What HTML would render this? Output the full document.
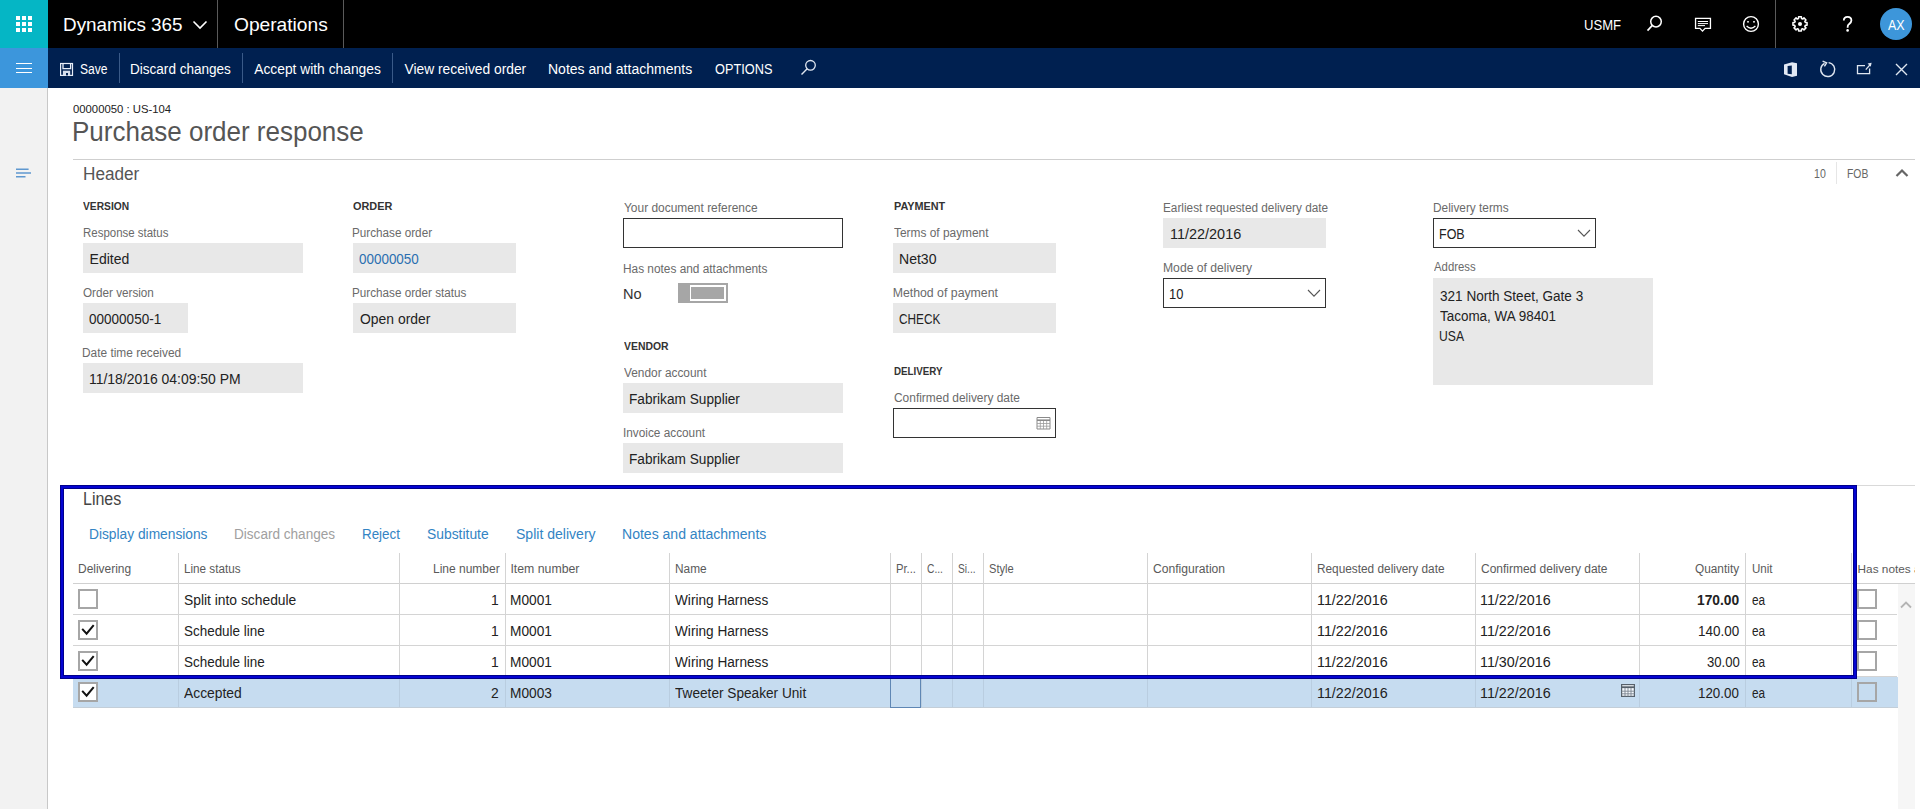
<!DOCTYPE html>
<html><head><meta charset="utf-8">
<style>
html,body{margin:0;padding:0;}
body{width:1920px;height:809px;overflow:hidden;position:relative;background:#fff;font-family:"Liberation Sans", sans-serif;}
.a{position:absolute;box-sizing:border-box;}
.t{position:absolute;white-space:nowrap;line-height:1;font-family:"Liberation Sans", sans-serif;}
.fld{position:absolute;background:#e8e8e8;}
.inp{position:absolute;box-sizing:border-box;border:1px solid #333;background:#fff;}
.hl{position:absolute;height:1px;background:#d4d4d4;}
.vl{position:absolute;width:1px;background:#d4d4d4;}
.cb{position:absolute;box-sizing:border-box;width:20px;height:20px;border:2px solid #a6a6a6;background:#fff;}
</style></head><body>
<!-- top bar -->
<div class="a" style="left:0;top:0;width:1920px;height:48px;background:#000"></div>
<div class="a" style="left:0;top:0;width:48px;height:48px;background:#05b6c5"></div>
<svg class="a" style="left:16px;top:16px" width="16" height="16" viewBox="0 0 16 16" fill="#fff">
<rect x="0" y="0" width="4" height="4"/><rect x="6" y="0" width="4" height="4"/><rect x="12" y="0" width="4" height="4"/>
<rect x="0" y="6" width="4" height="4"/><rect x="6" y="6" width="4" height="4"/><rect x="12" y="6" width="4" height="4"/>
<rect x="0" y="12" width="4" height="4"/><rect x="6" y="12" width="4" height="4"/><rect x="12" y="12" width="4" height="4"/>
</svg>
<svg class="a" style="left:192px;top:20px" width="16" height="10" viewBox="0 0 16 10"><path d="M1.5 1.5 L8 8 L14.5 1.5" stroke="#fff" stroke-width="1.6" fill="none"/></svg>
<div class="a" style="left:217px;top:0;width:1px;height:48px;background:#5a5a5a"></div>
<div class="a" style="left:343px;top:0;width:1px;height:48px;background:#5a5a5a"></div>
<div class="a" style="left:1775px;top:0;width:1px;height:48px;background:#5a5a5a"></div>
<!-- search -->
<svg class="a" style="left:1644px;top:13px" width="22" height="22" viewBox="0 0 22 22"><circle cx="12" cy="8.6" r="5.3" stroke="#fff" stroke-width="1.5" fill="none"/><path d="M8.3 12.4 L3.5 17.6" stroke="#fff" stroke-width="1.6"/></svg>
<!-- chat -->
<svg class="a" style="left:1692px;top:15px" width="22" height="20" viewBox="0 0 22 20"><path d="M3.55 3.45 H18.45 V13.35 H13.1 L10.5 16.1 L7.9 13.35 H3.55 Z" stroke="#fff" stroke-width="1.3" fill="none"/><path d="M5.8 6.5H16M5.8 8.6H16M5.8 10.6H13" stroke="#fff" stroke-width="1"/></svg>
<!-- smiley -->
<svg class="a" style="left:1740px;top:13px" width="22" height="22" viewBox="0 0 22 22"><circle cx="11" cy="11" r="7.4" stroke="#fff" stroke-width="1.4" fill="none"/><rect x="7.2" y="8" width="1.6" height="1.6" fill="#fff"/><rect x="13.2" y="8" width="1.6" height="1.6" fill="#fff"/><path d="M6.6 13 Q11 17.4 15.4 13" stroke="#fff" stroke-width="1.3" fill="none"/></svg>
<!-- gear -->
<svg class="a" style="left:1789px;top:13px" width="22" height="22" viewBox="0 0 22 22">
<g transform="translate(11,10.9)"><path d="M-1.47,-5.30 L-1.43,-7.06 L1.43,-7.06 L1.47,-5.30 L2.71,-4.79 L3.98,-6.00 L6.00,-3.98 L4.79,-2.71 L5.30,-1.47 L7.06,-1.43 L7.06,1.43 L5.30,1.47 L4.79,2.71 L6.00,3.98 L3.98,6.00 L2.71,4.79 L1.47,5.30 L1.43,7.06 L-1.43,7.06 L-1.47,5.30 L-2.71,4.79 L-3.98,6.00 L-6.00,3.98 L-4.79,2.71 L-5.30,1.47 L-7.06,1.43 L-7.06,-1.43 L-5.30,-1.47 L-4.79,-2.71 L-6.00,-3.98 L-3.98,-6.00 L-2.71,-4.79 Z" fill="none" stroke="#fff" stroke-width="1.5" stroke-linejoin="round"/><circle r="2" fill="#fff"/></g></svg>
<!-- help -->
<svg class="a" style="left:1839px;top:14px" width="16" height="20" viewBox="0 0 16 20"><path d="M4.8 6.5 C4.8 4.2 6.4 2.9 8.6 2.9 C10.8 2.9 12.4 4.3 12.4 6.5 C12.4 8.7 10.6 9.5 9.4 10.6 C8.8 11.2 8.6 11.8 8.6 13.8" stroke="#fff" stroke-width="1.8" fill="none"/><circle cx="8.6" cy="16.4" r="1.3" fill="#fff"/></svg>
<!-- avatar -->
<div class="a" style="left:1880px;top:8px;width:32px;height:32px;border-radius:50%;background:#3d96da"></div>

<!-- action bar -->
<div class="a" style="left:0;top:48px;width:1920px;height:40px;background:#002050"></div>
<div class="a" style="left:0;top:48px;width:48px;height:40px;background:#3c96dc"></div>
<div class="a" style="left:16px;top:63px;width:16px;height:1.4px;background:#fff"></div>
<div class="a" style="left:16px;top:67.5px;width:16px;height:1.4px;background:#fff"></div>
<div class="a" style="left:16px;top:72px;width:16px;height:1.4px;background:#fff"></div>
<svg class="a" style="left:59px;top:62px" width="15" height="15" viewBox="0 0 15 15"><rect x="1.6" y="1.5" width="11.9" height="11.9" stroke="#e6ecf6" stroke-width="1.2" fill="none"/><path d="M4 1.5V6.6H11.6V1.5" stroke="#e6ecf6" stroke-width="1.3" fill="none"/><rect x="3.9" y="8.7" width="7.3" height="4.7" fill="#d6deec"/><rect x="7" y="11" width="2" height="2.4" fill="#002050"/></svg>
<div class="a" style="left:119px;top:53px;width:1px;height:30px;background:#3a5a88"></div>
<div class="a" style="left:242px;top:53px;width:1px;height:30px;background:#3a5a88"></div>
<div class="a" style="left:392px;top:53px;width:1px;height:30px;background:#3a5a88"></div>
<svg class="a" style="left:798px;top:57px" width="22" height="22" viewBox="0 0 22 22"><circle cx="12.5" cy="8.3" r="4.8" stroke="#dfe6f0" stroke-width="1.3" fill="none"/><path d="M9.2 11.8 L3.5 17.5" stroke="#dfe6f0" stroke-width="1.4"/></svg>
<!-- right icons -->
<svg class="a" style="left:1782px;top:59px" width="18" height="20" viewBox="0 0 18 20"><path fill-rule="evenodd" d="M2 5.4 L10 3.2 L15 4.2 V16.8 L10 17.9 L2 15.2 Z M5.6 6.9 L9.8 6.4 V15.2 L5.6 14.8 Z" fill="#e2e9f4"/></svg>
<svg class="a" style="left:1817px;top:59px" width="21" height="21" viewBox="0 0 21 21"><path d="M7.6 4.3 A7 7 0 1 0 11.6 3.6" stroke="#dfe6f0" stroke-width="1.4" fill="none"/><path d="M5.6 2.2 L9.6 3.8 L7.4 7.3" stroke="#dfe6f0" stroke-width="1.4" fill="none"/></svg>
<svg class="a" style="left:1855px;top:60px" width="18" height="18" viewBox="0 0 18 18"><path d="M10 5.6H2.5V13.6H14.6V8.5" stroke="#dfe6f0" stroke-width="1.3" fill="none"/><path d="M10.8 9.6 L15.4 4.4" stroke="#dfe6f0" stroke-width="1.3" fill="none"/><path d="M16.6 2.8 L12.6 3.6 L15.8 6.8 Z" fill="#dfe6f0"/></svg>
<svg class="a" style="left:1894px;top:62px" width="15" height="15" viewBox="0 0 15 15"><path d="M2 2 L13 13 M13 2 L2 13" stroke="#dfe6f0" stroke-width="1.4"/></svg>

<!-- left nav -->
<div class="a" style="left:0;top:88px;width:48px;height:721px;background:#f2f2f2;border-right:1px solid #c8c8c8"></div>
<svg class="a" style="left:16px;top:166px" width="16" height="14" viewBox="0 0 16 14"><path d="M0 3.2H12.6M0 7H15M0 10.7H9.5" stroke="#5f98cf" stroke-width="1.5"/></svg>

<!-- header separators -->
<div class="hl" style="left:73px;top:159px;width:1842px;background:#cfcfcf"></div>
<div class="a" style="left:1836px;top:162px;width:1px;height:22px;background:#e6e6e6"></div>
<svg class="a" style="left:1894px;top:166px" width="16" height="12" viewBox="0 0 16 12"><path d="M2.5 10 L8 4.5 L13.5 10" stroke="#666" stroke-width="2.2" fill="none"/></svg>

<!-- fields -->
<div class="fld" style="left:83px;top:243px;width:220px;height:30px"></div>
<div class="fld" style="left:83px;top:303px;width:105px;height:30px"></div>
<div class="fld" style="left:83px;top:363px;width:220px;height:30px"></div>
<div class="fld" style="left:353px;top:243px;width:163px;height:30px"></div>
<div class="fld" style="left:353px;top:303px;width:163px;height:30px"></div>
<div class="inp" style="left:623px;top:218px;width:220px;height:30px"></div>
<!-- toggle -->
<div class="a" style="left:678px;top:283px;width:50px;height:20px;background:#a6a6a6"></div>
<div class="a" style="left:690px;top:285px;width:36px;height:16px;border:2px solid #fff;border-left-width:1px;background:#a6a6a6"></div>
<div class="fld" style="left:623px;top:383px;width:220px;height:30px"></div>
<div class="fld" style="left:623px;top:443px;width:220px;height:30px"></div>
<div class="fld" style="left:893px;top:243px;width:163px;height:30px"></div>
<div class="fld" style="left:893px;top:303px;width:163px;height:30px"></div>
<div class="inp" style="left:893px;top:408px;width:163px;height:30px"></div>
<svg class="a" style="left:1036px;top:416px" width="15" height="14" viewBox="0 0 15 14"><path d="M1 1.5H14V13H1Z" stroke="#8a8a8a" stroke-width="1" fill="none"/><path d="M1 4.2H14" stroke="#8a8a8a" stroke-width="1.6"/><path d="M4.3 5V13M7.5 5V13M10.7 5V13M1 7.5H14M1 10.2H14" stroke="#9a9a9a" stroke-width="0.8"/></svg>
<div class="fld" style="left:1163px;top:218px;width:163px;height:30px"></div>
<div class="inp" style="left:1163px;top:278px;width:163px;height:30px"></div>
<svg class="a" style="left:1306px;top:287px" width="16" height="12" viewBox="0 0 16 12"><path d="M2 3 L8 9.2 L14 3" stroke="#555" stroke-width="1.1" fill="none"/></svg>
<div class="inp" style="left:1433px;top:218px;width:163px;height:30px"></div>
<svg class="a" style="left:1576px;top:227px" width="16" height="12" viewBox="0 0 16 12"><path d="M2 3 L8 9.2 L14 3" stroke="#555" stroke-width="1.1" fill="none"/></svg>
<div class="fld" style="left:1433px;top:278px;width:220px;height:107px"></div>

<!-- lines section separator -->
<div class="hl" style="left:73px;top:485px;width:1842px;background:#d9d9d9"></div>

<!-- grid -->
<div class="a" style="left:73px;top:677px;width:1825px;height:30px;background:#c6dcf0"></div>
<div class="a" style="left:1898px;top:584px;width:17px;height:225px;background:#f6f6f6"></div>
<svg class="a" style="left:1899px;top:598px" width="14" height="12" viewBox="0 0 14 12"><path d="M2 9.5 L7 4.5 L12 9.5" stroke="#b4b4b4" stroke-width="1.8" fill="none"/></svg>
<div class="hl" style="left:73px;top:583px;width:1842px;background:#d0d0d0"></div>
<div class="hl" style="left:73px;top:614px;width:1824px"></div>
<div class="hl" style="left:73px;top:645px;width:1824px"></div>
<div class="hl" style="left:73px;top:676px;width:1824px"></div>
<div class="hl" style="left:73px;top:707px;width:1825px;background:#c3ced8"></div>
<div class="vl" style="left:178px;top:553px;height:124px"></div><div class="vl" style="left:178px;top:677px;height:30px;background:#b9cde0"></div>
<div class="vl" style="left:399px;top:553px;height:124px"></div><div class="vl" style="left:399px;top:677px;height:30px;background:#b9cde0"></div>
<div class="vl" style="left:505px;top:553px;height:124px"></div><div class="vl" style="left:505px;top:677px;height:30px;background:#b9cde0"></div>
<div class="vl" style="left:669px;top:553px;height:124px"></div><div class="vl" style="left:669px;top:677px;height:30px;background:#b9cde0"></div>
<div class="vl" style="left:890px;top:553px;height:124px"></div><div class="vl" style="left:890px;top:677px;height:30px;background:#b9cde0"></div>
<div class="vl" style="left:921px;top:553px;height:124px"></div><div class="vl" style="left:921px;top:677px;height:30px;background:#b9cde0"></div>
<div class="vl" style="left:952px;top:553px;height:124px"></div><div class="vl" style="left:952px;top:677px;height:30px;background:#b9cde0"></div>
<div class="vl" style="left:983px;top:553px;height:124px"></div><div class="vl" style="left:983px;top:677px;height:30px;background:#b9cde0"></div>
<div class="vl" style="left:1147px;top:553px;height:124px"></div><div class="vl" style="left:1147px;top:677px;height:30px;background:#b9cde0"></div>
<div class="vl" style="left:1311px;top:553px;height:124px"></div><div class="vl" style="left:1311px;top:677px;height:30px;background:#b9cde0"></div>
<div class="vl" style="left:1475px;top:553px;height:124px"></div><div class="vl" style="left:1475px;top:677px;height:30px;background:#b9cde0"></div>
<div class="vl" style="left:1639px;top:553px;height:124px"></div><div class="vl" style="left:1639px;top:677px;height:30px;background:#b9cde0"></div>
<div class="vl" style="left:1745px;top:553px;height:124px"></div><div class="vl" style="left:1745px;top:677px;height:30px;background:#b9cde0"></div>
<div class="vl" style="left:1851px;top:553px;height:124px"></div><div class="vl" style="left:1851px;top:677px;height:30px;background:#b9cde0"></div>
<div class="a" style="left:890px;top:677px;width:31px;height:31px;border:1px solid #5f87b4"></div>
<svg class="a" style="left:1620px;top:683px" width="16" height="15" viewBox="0 0 16 15"><rect x="1.6" y="1.6" width="12.8" height="11.8" fill="#f4f8fc" stroke="#56606a" stroke-width="1.2"/><path d="M1.6 4.2H14.4" stroke="#56606a" stroke-width="1.8"/><path d="M5 5V13.4M8 5V13.4M11 5V13.4M1.6 8.2H14.4M1.6 10.8H14.4" stroke="#7a8490" stroke-width="0.9"/></svg>
<div class="cb" style="left:78px;top:589px"></div>
<div class="cb" style="left:1857px;top:589px;background:transparent"></div>
<div class="cb" style="left:78px;top:620px"><svg width="16" height="16" viewBox="0 0 16 16" style="position:absolute;left:0;top:0"><path d="M2.2 6.9 L6.6 11.7 L13.7 3.2" stroke="#111" stroke-width="2" fill="none"/></svg></div>
<div class="cb" style="left:1857px;top:620px;background:transparent"></div>
<div class="cb" style="left:78px;top:651px"><svg width="16" height="16" viewBox="0 0 16 16" style="position:absolute;left:0;top:0"><path d="M2.2 6.9 L6.6 11.7 L13.7 3.2" stroke="#111" stroke-width="2" fill="none"/></svg></div>
<div class="cb" style="left:1857px;top:651px;background:transparent"></div>
<div class="cb" style="left:78px;top:682px"><svg width="16" height="16" viewBox="0 0 16 16" style="position:absolute;left:0;top:0"><path d="M2.2 6.9 L6.6 11.7 L13.7 3.2" stroke="#111" stroke-width="2" fill="none"/></svg></div>
<div class="cb" style="left:1857px;top:682px;background:transparent"></div>

<div class="t" style="left:62.58px;top:16.00px;transform-origin:0 0;font-size:18.5px;color:#fff;transform:scaleX(1.0205);">Dynamics 365</div>
<div class="t" style="left:233.50px;top:16.00px;transform-origin:0 0;font-size:18.5px;color:#fff;transform:scaleX(1.0361);">Operations</div>
<div class="t" style="left:1583.59px;top:18.00px;transform-origin:0 0;font-size:14.4px;color:#fff;transform:scaleX(0.9080);">USMF</div>
<div class="t" style="left:1888.00px;top:19.00px;transform-origin:0 0;font-size:13.8px;color:#fff;transform:scaleX(0.9010);">AX</div>
<div class="t" style="left:79.50px;top:63.00px;transform-origin:0 0;font-size:13.8px;color:#fff;transform:scaleX(0.8749);">Save</div>
<div class="t" style="left:130.27px;top:63.00px;transform-origin:0 0;font-size:13.8px;color:#fff;transform:scaleX(0.9817);">Discard changes</div>
<div class="t" style="left:254.25px;top:63.00px;transform-origin:0 0;font-size:13.8px;color:#fff;">Accept with changes</div>
<div class="t" style="left:404.50px;top:63.00px;transform-origin:0 0;font-size:13.8px;color:#fff;">View received order</div>
<div class="t" style="left:547.73px;top:63.00px;transform-origin:0 0;font-size:13.8px;color:#fff;transform:scaleX(1.0161);">Notes and attachments</div>
<div class="t" style="left:714.50px;top:63.00px;transform-origin:0 0;font-size:13.8px;color:#fff;transform:scaleX(0.9250);">OPTIONS</div>
<div class="t" style="left:73.40px;top:103.00px;transform-origin:0 0;font-size:11.6px;color:#222;transform:scaleX(0.9752);">00000050 : US-104</div>
<div class="t" style="left:71.51px;top:118.00px;transform-origin:0 0;font-size:27.5px;color:#555;transform:scaleX(0.9449);">Purchase order response</div>
<div class="t" style="left:82.81px;top:165.00px;transform-origin:0 0;font-size:18.3px;color:#555;transform:scaleX(0.9393);">Header</div>
<div class="t" style="left:1814.00px;top:168.00px;transform-origin:0 0;font-size:12.3px;color:#666;transform:scaleX(0.8599);">10</div>
<div class="t" style="left:1847.06px;top:168.00px;transform-origin:0 0;font-size:12.3px;color:#666;transform:scaleX(0.8432);">FOB</div>
<div class="t" style="left:83.40px;top:201.00px;transform-origin:0 0;font-size:11px;color:#333;font-weight:700;transform:scaleX(0.9321);">VERSION</div>
<div class="t" style="left:82.77px;top:227.00px;transform-origin:0 0;font-size:12.3px;color:#6a6a6a;transform:scaleX(0.9320);">Response status</div>
<div class="t" style="left:89.60px;top:252.00px;transform-origin:0 0;font-size:14px;color:#222;">Edited</div>
<div class="t" style="left:83.40px;top:287.00px;transform-origin:0 0;font-size:12.3px;color:#6a6a6a;transform:scaleX(0.9511);">Order version</div>
<div class="t" style="left:89.30px;top:312.00px;transform-origin:0 0;font-size:14px;color:#222;transform:scaleX(0.9660);">00000050-1</div>
<div class="t" style="left:82.43px;top:347.00px;transform-origin:0 0;font-size:12.3px;color:#6a6a6a;transform:scaleX(0.9668);">Date time received</div>
<div class="t" style="left:89.00px;top:372.00px;transform-origin:0 0;font-size:14px;color:#222;transform:scaleX(0.9957);">11/18/2016 04:09:50 PM</div>
<div class="t" style="left:353.00px;top:201.00px;transform-origin:0 0;font-size:11px;color:#333;font-weight:700;transform:scaleX(0.9900);">ORDER</div>
<div class="t" style="left:352.05px;top:227.00px;transform-origin:0 0;font-size:12.3px;color:#6a6a6a;transform:scaleX(0.9521);">Purchase order</div>
<div class="t" style="left:359.30px;top:252.00px;transform-origin:0 0;font-size:14px;color:#2a6fb0;transform:scaleX(0.9600);">00000050</div>
<div class="t" style="left:352.05px;top:287.00px;transform-origin:0 0;font-size:12.3px;color:#6a6a6a;transform:scaleX(0.9509);">Purchase order status</div>
<div class="t" style="left:360.00px;top:312.00px;transform-origin:0 0;font-size:14px;color:#222;transform:scaleX(0.9936);">Open order</div>
<div class="t" style="left:623.70px;top:202.00px;transform-origin:0 0;font-size:12.3px;color:#6a6a6a;transform:scaleX(0.9703);">Your document reference</div>
<div class="t" style="left:622.74px;top:263.00px;transform-origin:0 0;font-size:12.3px;color:#6a6a6a;transform:scaleX(0.9640);">Has notes and attachments</div>
<div class="t" style="left:622.94px;top:288.00px;transform-origin:0 0;font-size:13.8px;color:#333;transform:scaleX(1.0552);">No</div>
<div class="t" style="left:623.70px;top:341.00px;transform-origin:0 0;font-size:11px;color:#333;font-weight:700;transform:scaleX(0.9466);">VENDOR</div>
<div class="t" style="left:623.70px;top:367.00px;transform-origin:0 0;font-size:12.3px;color:#6a6a6a;transform:scaleX(0.9646);">Vendor account</div>
<div class="t" style="left:628.72px;top:392.00px;transform-origin:0 0;font-size:14px;color:#222;transform:scaleX(0.9758);">Fabrikam Supplier</div>
<div class="t" style="left:622.74px;top:427.00px;transform-origin:0 0;font-size:12.3px;color:#6a6a6a;transform:scaleX(0.9596);">Invoice account</div>
<div class="t" style="left:628.72px;top:452.00px;transform-origin:0 0;font-size:14px;color:#222;transform:scaleX(0.9758);">Fabrikam Supplier</div>
<div class="t" style="left:893.70px;top:201.00px;transform-origin:0 0;font-size:11px;color:#333;font-weight:700;transform:scaleX(0.9859);">PAYMENT</div>
<div class="t" style="left:893.70px;top:227.00px;transform-origin:0 0;font-size:12.3px;color:#6a6a6a;transform:scaleX(0.9674);">Terms of payment</div>
<div class="t" style="left:898.70px;top:252.00px;transform-origin:0 0;font-size:14px;color:#222;transform:scaleX(1.0035);">Net30</div>
<div class="t" style="left:892.70px;top:287.00px;transform-origin:0 0;font-size:12.3px;color:#6a6a6a;">Method of payment</div>
<div class="t" style="left:899.40px;top:312.00px;transform-origin:0 0;font-size:14px;color:#222;transform:scaleX(0.8416);">CHECK</div>
<div class="t" style="left:893.70px;top:366.00px;transform-origin:0 0;font-size:11px;color:#333;font-weight:700;transform:scaleX(0.8884);">DELIVERY</div>
<div class="t" style="left:893.70px;top:392.00px;transform-origin:0 0;font-size:12.3px;color:#6a6a6a;transform:scaleX(0.9698);">Confirmed delivery date</div>
<div class="t" style="left:1162.54px;top:202.00px;transform-origin:0 0;font-size:12.3px;color:#6a6a6a;transform:scaleX(0.9585);">Earliest requested delivery date</div>
<div class="t" style="left:1169.57px;top:227.00px;transform-origin:0 0;font-size:14px;color:#222;transform:scaleX(1.0316);">11/22/2016</div>
<div class="t" style="left:1162.51px;top:262.00px;transform-origin:0 0;font-size:12.3px;color:#6a6a6a;transform:scaleX(0.9881);">Mode of delivery</div>
<div class="t" style="left:1169.38px;top:287.00px;transform-origin:0 0;font-size:14px;color:#222;transform:scaleX(0.9198);">10</div>
<div class="t" style="left:1432.54px;top:202.00px;transform-origin:0 0;font-size:12.3px;color:#6a6a6a;transform:scaleX(0.9622);">Delivery terms</div>
<div class="t" style="left:1438.51px;top:227.00px;transform-origin:0 0;font-size:14px;color:#222;transform:scaleX(0.8928);">FOB</div>
<div class="t" style="left:1433.50px;top:261.00px;transform-origin:0 0;font-size:12.3px;color:#6a6a6a;transform:scaleX(0.9230);">Address</div>
<div class="t" style="left:1439.80px;top:289.00px;transform-origin:0 0;font-size:14px;color:#222;transform:scaleX(0.9684);">321 North Steet, Gate 3</div>
<div class="t" style="left:1439.80px;top:309.00px;transform-origin:0 0;font-size:14px;color:#222;transform:scaleX(0.9601);">Tacoma, WA 98401</div>
<div class="t" style="left:1438.93px;top:329.00px;transform-origin:0 0;font-size:14px;color:#222;transform:scaleX(0.8682);">USA</div>
<div class="t" style="left:82.91px;top:490.00px;transform-origin:0 0;font-size:18px;color:#444;transform:scaleX(0.8898);">Lines</div>
<div class="t" style="left:88.60px;top:528.00px;transform-origin:0 0;font-size:13.8px;color:#3384c4;transform:scaleX(0.9970);">Display dimensions</div>
<div class="t" style="left:233.82px;top:528.00px;transform-origin:0 0;font-size:13.8px;color:#a0a0a0;transform:scaleX(0.9837);">Discard changes</div>
<div class="t" style="left:361.53px;top:528.00px;transform-origin:0 0;font-size:13.8px;color:#3384c4;transform:scaleX(0.9693);">Reject</div>
<div class="t" style="left:427.00px;top:528.00px;transform-origin:0 0;font-size:13.8px;color:#3384c4;transform:scaleX(1.0051);">Substitute</div>
<div class="t" style="left:516.00px;top:528.00px;transform-origin:0 0;font-size:13.8px;color:#3384c4;transform:scaleX(1.0177);">Split delivery</div>
<div class="t" style="left:621.58px;top:528.00px;transform-origin:0 0;font-size:13.8px;color:#3384c4;transform:scaleX(1.0171);">Notes and attachments</div>
<div class="t" style="left:77.63px;top:563.00px;transform-origin:0 0;font-size:12.3px;color:#5a5a5a;transform:scaleX(0.9715);">Delivering</div>
<div class="t" style="left:183.65px;top:563.00px;transform-origin:0 0;font-size:12.3px;color:#5a5a5a;transform:scaleX(0.9499);">Line status</div>
<div class="t" style="left:433.12px;top:563.00px;transform-origin:0 0;font-size:12.3px;color:#5a5a5a;transform:scaleX(0.9753);">Line number</div>
<div class="t" style="left:510.40px;top:563.00px;transform-origin:0 0;font-size:12.3px;color:#5a5a5a;">Item number</div>
<div class="t" style="left:674.64px;top:563.00px;transform-origin:0 0;font-size:12.3px;color:#5a5a5a;transform:scaleX(0.9636);">Name</div>
<div class="t" style="left:895.69px;top:563.00px;transform-origin:0 0;font-size:12.3px;color:#5a5a5a;transform:scaleX(0.9144);">Pr...</div>
<div class="t" style="left:927.20px;top:563.00px;transform-origin:0 0;font-size:12.3px;color:#5a5a5a;transform:scaleX(0.8336);">C...</div>
<div class="t" style="left:958.10px;top:563.00px;transform-origin:0 0;font-size:12.3px;color:#5a5a5a;transform:scaleX(0.8282);">Si...</div>
<div class="t" style="left:989.10px;top:563.00px;transform-origin:0 0;font-size:12.3px;color:#5a5a5a;transform:scaleX(0.9055);">Style</div>
<div class="t" style="left:1153.10px;top:563.00px;transform-origin:0 0;font-size:12.3px;color:#5a5a5a;transform:scaleX(0.9849);">Configuration</div>
<div class="t" style="left:1316.54px;top:563.00px;transform-origin:0 0;font-size:12.3px;color:#5a5a5a;transform:scaleX(0.9615);">Requested delivery date</div>
<div class="t" style="left:1481.30px;top:563.00px;transform-origin:0 0;font-size:12.3px;color:#5a5a5a;transform:scaleX(0.9744);">Confirmed delivery date</div>
<div class="t" style="left:1694.60px;top:563.00px;transform-origin:0 0;font-size:12.3px;color:#5a5a5a;transform:scaleX(0.9626);">Quantity</div>
<div class="t" style="left:1751.60px;top:563.00px;transform-origin:0 0;font-size:12.3px;color:#5a5a5a;transform:scaleX(0.9398);">Unit</div>
<div class="t" style="left:184.40px;top:593.00px;transform-origin:0 0;font-size:14px;color:#222;transform:scaleX(0.9882);">Split into schedule</div>
<div class="t" style="left:490.98px;top:593.00px;transform-origin:0 0;font-size:14px;color:#222;transform:scaleX(0.9900);">1</div>
<div class="t" style="left:510.42px;top:593.00px;transform-origin:0 0;font-size:14px;color:#222;transform:scaleX(0.9781);">M0001</div>
<div class="t" style="left:675.20px;top:593.00px;transform-origin:0 0;font-size:14px;color:#222;transform:scaleX(0.9740);">Wiring Harness</div>
<div class="t" style="left:1316.98px;top:593.00px;transform-origin:0 0;font-size:14px;color:#222;transform:scaleX(1.0228);">11/22/2016</div>
<div class="t" style="left:1480.48px;top:593.00px;transform-origin:0 0;font-size:14px;color:#222;transform:scaleX(1.0228);">11/22/2016</div>
<div class="t" style="left:1697.20px;top:593.00px;transform-origin:0 0;font-size:14px;color:#222;font-weight:700;transform:scaleX(0.9829);">170.00</div>
<div class="t" style="left:1751.60px;top:593.00px;transform-origin:0 0;font-size:14px;color:#222;transform:scaleX(0.8425);">ea</div>
<div class="t" style="left:184.40px;top:624.00px;transform-origin:0 0;font-size:14px;color:#222;transform:scaleX(0.9599);">Schedule line</div>
<div class="t" style="left:490.98px;top:624.00px;transform-origin:0 0;font-size:14px;color:#222;transform:scaleX(0.9900);">1</div>
<div class="t" style="left:510.42px;top:624.00px;transform-origin:0 0;font-size:14px;color:#222;transform:scaleX(0.9781);">M0001</div>
<div class="t" style="left:675.20px;top:624.00px;transform-origin:0 0;font-size:14px;color:#222;transform:scaleX(0.9740);">Wiring Harness</div>
<div class="t" style="left:1316.98px;top:624.00px;transform-origin:0 0;font-size:14px;color:#222;transform:scaleX(1.0228);">11/22/2016</div>
<div class="t" style="left:1480.48px;top:624.00px;transform-origin:0 0;font-size:14px;color:#222;transform:scaleX(1.0228);">11/22/2016</div>
<div class="t" style="left:1698.14px;top:624.00px;transform-origin:0 0;font-size:14px;color:#222;transform:scaleX(0.9611);">140.00</div>
<div class="t" style="left:1751.60px;top:624.00px;transform-origin:0 0;font-size:14px;color:#222;transform:scaleX(0.8425);">ea</div>
<div class="t" style="left:184.40px;top:655.00px;transform-origin:0 0;font-size:14px;color:#222;transform:scaleX(0.9599);">Schedule line</div>
<div class="t" style="left:490.98px;top:655.00px;transform-origin:0 0;font-size:14px;color:#222;transform:scaleX(0.9900);">1</div>
<div class="t" style="left:510.42px;top:655.00px;transform-origin:0 0;font-size:14px;color:#222;transform:scaleX(0.9781);">M0001</div>
<div class="t" style="left:675.20px;top:655.00px;transform-origin:0 0;font-size:14px;color:#222;transform:scaleX(0.9740);">Wiring Harness</div>
<div class="t" style="left:1316.98px;top:655.00px;transform-origin:0 0;font-size:14px;color:#222;transform:scaleX(1.0228);">11/22/2016</div>
<div class="t" style="left:1480.48px;top:655.00px;transform-origin:0 0;font-size:14px;color:#222;transform:scaleX(1.0228);">11/30/2016</div>
<div class="t" style="left:1706.50px;top:655.00px;transform-origin:0 0;font-size:14px;color:#222;transform:scaleX(0.9362);">30.00</div>
<div class="t" style="left:1751.60px;top:655.00px;transform-origin:0 0;font-size:14px;color:#222;transform:scaleX(0.8425);">ea</div>
<div class="t" style="left:184.40px;top:686.00px;transform-origin:0 0;font-size:14px;color:#222;transform:scaleX(0.9898);">Accepted</div>
<div class="t" style="left:490.98px;top:686.00px;transform-origin:0 0;font-size:14px;color:#222;transform:scaleX(0.9900);">2</div>
<div class="t" style="left:510.42px;top:686.00px;transform-origin:0 0;font-size:14px;color:#222;transform:scaleX(0.9781);">M0003</div>
<div class="t" style="left:675.20px;top:686.00px;transform-origin:0 0;font-size:14px;color:#222;transform:scaleX(0.9745);">Tweeter Speaker Unit</div>
<div class="t" style="left:1316.98px;top:686.00px;transform-origin:0 0;font-size:14px;color:#222;transform:scaleX(1.0228);">11/22/2016</div>
<div class="t" style="left:1480.48px;top:686.00px;transform-origin:0 0;font-size:14px;color:#222;transform:scaleX(1.0228);">11/22/2016</div>
<div class="t" style="left:1698.45px;top:686.00px;transform-origin:0 0;font-size:14px;color:#222;transform:scaleX(0.9540);">120.00</div>
<div class="t" style="left:1751.60px;top:686.00px;transform-origin:0 0;font-size:14px;color:#222;transform:scaleX(0.8425);">ea</div>
<div class="a" style="left:1857px;top:560px;width:58px;height:20px;overflow:hidden"><div class="t" style="left:0.6px;top:4px;font-size:11.8px;color:#5a5a5a;">Has notes and attachments</div></div>

<!-- blue highlight rectangle -->
<div class="a" style="left:60px;top:485px;width:1797px;height:194px;border:1px solid #00008c;box-shadow:inset 0 0 0 2px #0404d2, inset 0 0 0 3px #00008c"></div>
</body></html>
